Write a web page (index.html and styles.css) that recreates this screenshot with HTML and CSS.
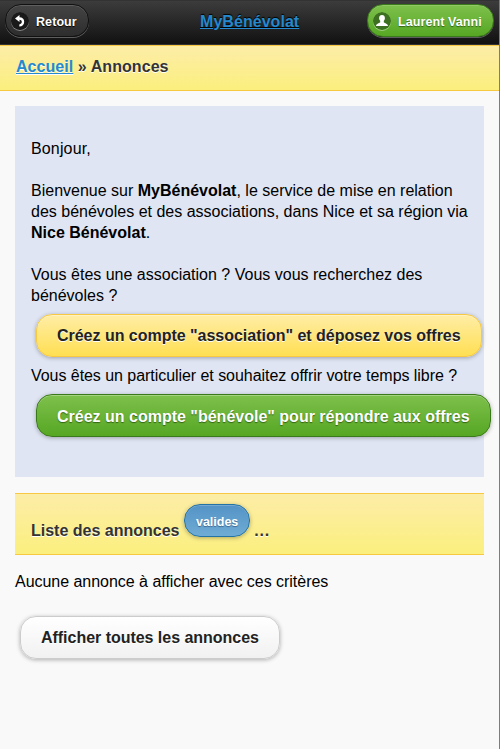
FILE: index.html
```html
<!DOCTYPE html>
<html lang="fr">
<head>
<meta charset="utf-8">
<title>MyBénévolat</title>
<link rel="stylesheet" href="styles.css">
</head>
<body>
<header class="topbar">
  <a class="btn small dark"><svg class="icon" viewBox="0 0 18 18"><circle cx="9" cy="9" r="9" fill="#191919"/><path d="M8.500 3v2.300c2.800 0 4.700 1.800 4.700 4.400 0 2.700-2 4.700-4.900 4.900v-2.200c1.600-.3 2.500-1.300 2.500-2.600 0-1.300-.9-2.100-2.300-2.100V10L4 6.400z" fill="#fff"/></svg>Retour</a>
  <h1 class="brand"><a class="link">MyBénévolat</a></h1>
  <a class="btn small green"><svg class="icon" viewBox="0 0 18 18"><circle cx="9" cy="9" r="9" fill="#3d7021"/><path d="M9 3c1.800 0 2.900 1.100 2.900 2.900 0 1.400-.5 2.200-1.100 2.900v1.400c0 .7 4.200 1.200 4.200 3.800H3c0-2.600 4.200-3.100 4.200-3.800V8.800C6.600 8.100 6.100 7.300 6.100 5.900 6.100 4.100 7.200 3 9 3z" fill="#fff"/></svg>Laurent Vanni</a>
</header>
<nav class="bar crumbs"><a class="link">Accueil</a> » Annonces</nav>
<main class="content">
  <section class="welcome">
    <p class="greeting">Bonjour,</p>
    <p>Bienvenue sur <b>MyBénévolat</b>, le service de mise en relation<br>des bénévoles et des associations, dans Nice et sa région via<br><b>Nice Bénévolat</b>.</p>
    <p class="lead">Vous êtes une association ? Vous vous recherchez des<br>bénévoles ?</p>
    <a class="btn large yellow">Créez un compte "association" et déposez vos offres</a>
    <p class="lead tight">Vous êtes un particulier et souhaitez offrir votre temps libre ?</p>
    <a class="btn large green">Créez un compte "bénévole" pour répondre aux offres</a>
  </section>
  <h2 class="bar list-title">Liste des annonces <a class="btn small blue">valides</a> <span class="dots">...</span></h2>
  <p class="empty">Aucune annonce à afficher avec ces critères</p>
  <a class="btn large white">Afficher toutes les annonces</a>
</main>
</body>
</html>
```
FILE: styles.css
```css
* { box-sizing: border-box; }
body {
  margin: 0;
  height: 749px;
  overflow: hidden;
  border-right: 1px solid #857d68;
  background: #f9f9f9;
  color: #000;
  font: 16px/21px "Liberation Sans", Arial, sans-serif;
}
p { margin: 0 0 21px; white-space: nowrap; }
.link { color: #2489ce; text-decoration: underline; }

.topbar {
  display: flex;
  align-items: flex-start;
  justify-content: space-between;
  height: 45px;
  padding: 3px 5px 0;
  border: solid #333;
  border-width: 1px 0;
  background: linear-gradient(#3c3c3c, #111);
}
.brand {
  margin: 7px 0 0;
  width: 100px;
  font-size: 16px;
  line-height: 21px;
  letter-spacing: .05px;
  text-shadow: 0 -1px 1px #000;
}
.topbar .dark { width: 84px; margin-right: 111px; letter-spacing: .08px; }
.topbar .green { width: 127px; margin-left: auto; letter-spacing: .08px; }

.bar {
  border: solid #f7c942;
  border-width: 1px 0;
  background: linear-gradient(#fceda7, #fbef7e);
  color: #333;
  font-size: 16px;
  font-weight: bold;
  text-shadow: 0 1px 0 #fff;
}
.crumbs { height: 46px; padding: 10px 16px; letter-spacing: .06px; }

.btn {
  display: inline-flex;
  align-items: center;
  border: 1px solid;
  white-space: nowrap;
  font-weight: bold;
}
.large {
  display: flex;
  width: max-content;
  height: 43px;
  margin-left: 5px;
  padding: 0 20px;
  border-radius: 16px;
  box-shadow: 0 1px 4px rgba(0, 0, 0, .3), inset 0 1px 0 rgba(255, 255, 255, .3);
}
.small {
  height: 33px;
  border-radius: 16px;
  font-size: 12.5px;
  line-height: 16px;
  box-shadow: 0 1px 0 rgba(255, 255, 255, .3), inset 0 1px 0 rgba(255, 255, 255, .15);
}
.topbar .small { padding: 2px 0 0 5px; }
.icon { width: 18px; height: 18px; margin: -2px 7px 0 0; border-radius: 50%; box-shadow: 0 1px 0 rgba(255, 255, 255, .4); }
.dark { border-color: #111; background: linear-gradient(#444, #2d2d2d); color: #fff; text-shadow: 0 1px 1px #000; }
.green { border-color: #3b7a1b; background: linear-gradient(#7ec04c, #56a724); color: #fff; text-shadow: 0 1px 1px #336413; }
.yellow { border-color: #f7c942; background: linear-gradient(#ffeda6, #ffdf52); color: #222; text-shadow: 0 1px 0 #fff; }
.blue { border-color: #2373a5; background: linear-gradient(#5393c5, #6facd5); color: #fff; text-shadow: 0 1px 1px #3e6790; }
.white { border-color: #ccc; background: linear-gradient(#fff, #f1f1f1); color: #222; text-shadow: 0 1px 0 #fff; }

.content { padding: 15px; }
.welcome { height: 371px; padding: 32px 16px 0; background: #dfe5f3; }
.welcome .lead { margin-bottom: 8px; }
.welcome .tight { letter-spacing: -.05px; }
.welcome .yellow { margin-bottom: 8px; letter-spacing: -.02px; }
.welcome .green { padding-top: 2px; }
.greeting { letter-spacing: .15px; }
.list-title {
  display: flex;
  align-items: flex-start;
  height: 62px;
  margin: 16px 0;
  padding: 26px 16px 0;
  line-height: 21px;
  white-space: pre;
}
.list-title .blue {
  height: 33px;
  margin-top: -16px;
  padding: 2px 11px 0;
  box-shadow: 0 1px 4px rgba(0, 0, 0, .3), inset 0 1px 0 rgba(255, 255, 255, .2);
}
.dots { margin-left: 4px; letter-spacing: .8px; }
.empty { margin-bottom: 24px; letter-spacing: -.03px; }
.white { letter-spacing: -.03px; }
```
